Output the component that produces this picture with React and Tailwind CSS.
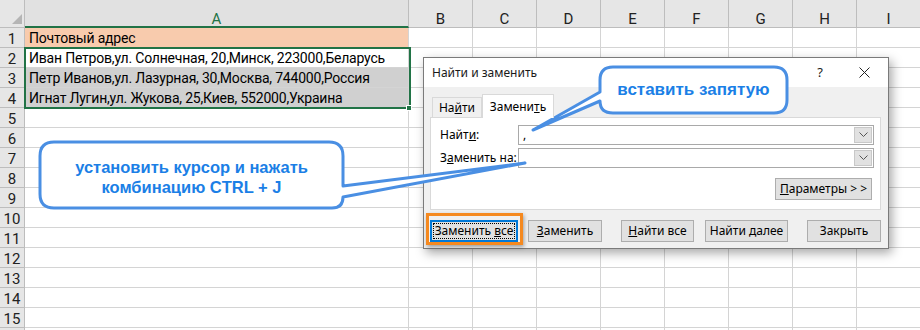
import React from "react";

const COLS = ["B", "C", "D", "E", "F", "G", "H", "I"];
const ROWS = Array.from({ length: 16 }, (_, i) => i + 1);

const A_CELLS = {
  1: { text: "Почтовый адрес", bg: "bg-[#f8cbad]" },
  2: { text: "Иван Петров,ул. Солнечная, 20,Минск, 223000,Беларусь", bg: "bg-white" },
  3: { text: "Петр Иванов,ул. Лазурная, 30,Москва, 744000,Россия", bg: "bg-[#d0d0d0]" },
  4: { text: "Игнат Лугин,ул. Жукова, 25,Киев, 552000,Украина", bg: "bg-[#d0d0d0]" },
};

function Chevron() {
  return (
    <svg width="9" height="6" viewBox="0 0 9 6">
      <path d="M0.5 0.5 L4.5 4.5 L8.5 0.5" fill="none" stroke="#555" strokeWidth="1" />
    </svg>
  );
}

function Combo({ value }) {
  return (
    <div className="flex-1 h-[20px] border border-[#a9a9a9] bg-white flex">
      <div className="flex-1 pl-[4px] text-[12px] leading-[18px]">{value}</div>
      <div className="w-[18px] m-[1px] bg-[#e1e1e1] border border-[#c8c8c8] flex items-center justify-center">
        <Chevron />
      </div>
    </div>
  );
}

function Btn({ w, children }) {
  return (
    <div className={`${w} h-[22px] bg-[#e1e1e1] border border-[#adadad] flex items-center justify-center text-[12px]`}>
      {children}
    </div>
  );
}

function Dialog() {
  return (
    <div
      className="absolute left-[423px] top-[57px] w-[466px] h-[192px] border border-[#7a7a7a] bg-[#f0f0f0] flex flex-col shadow-[3px_4px_10px_rgba(0,0,0,0.35)]"
      style={{ fontFamily: '"Noto Sans", "Open Sans", sans-serif' }}
    >
      <div className="h-[29px] bg-white flex items-center pl-[8px] pr-[18px] text-[12px] text-[#1a1a1a]">
        <span>Найти и заменить</span>
        <span className="ml-auto text-[13px]">?</span>
        <svg className="ml-[36px]" width="11" height="11" viewBox="0 0 11 11">
          <path d="M0.5 0.5 L10.5 10.5 M10.5 0.5 L0.5 10.5" stroke="#222" strokeWidth="1" />
        </svg>
      </div>
      <div className="flex flex-col pl-[6px] pt-[6px]">
        <div className="flex items-end h-[24px] ml-[2px]">
          <div className="w-[50px] h-[20px] border border-b-0 border-[#d9d9d9] bg-[#f0f0f0] flex items-center justify-center text-[12px]">
            <span>
              На<span className="underline">й</span>ти
            </span>
          </div>
          <div className="w-[72px] h-[24px] border border-b-0 border-[#d9d9d9] bg-white flex items-center justify-center text-[12px] relative z-10 mb-[-1px]">
            <span>
              Замени<span className="underline">т</span>ь
            </span>
          </div>
        </div>
        <div className="w-[451px] h-[93px] bg-white border border-[#d9d9d9] pt-[7px] pl-[9px] pr-[6px] flex flex-col">
          <div className="flex items-center h-[20px]">
            <div className="w-[78px] text-[12px]">
              Найт<span className="underline">и</span>:
            </div>
            <Combo value="," />
          </div>
          <div className="flex items-center h-[20px] mt-[3px]">
            <div className="w-[78px] text-[12px]">
              З<span className="underline">а</span>менить на:
            </div>
            <Combo value="" />
          </div>
          <div className="flex justify-end mt-[10px] pr-[2px]">
            <Btn w="w-[97px]">
              <span>
                <span className="underline">П</span>араметры &gt; &gt;
              </span>
            </Btn>
          </div>
        </div>
        <div className="flex mt-[10px]">
          <div className="w-[88px] h-[22px] bg-[#e1e1e1] border-2 border-[#0078d7] flex p-[1px]">
            <div className="flex-1 border border-dotted border-black flex items-center justify-center text-[12px]">
              <span>
                Заменить <span className="underline">в</span>се
              </span>
            </div>
          </div>
          <div className="ml-[10px]">
            <Btn w="w-[74px]">
              <span>
                <span className="underline">З</span>аменить
              </span>
            </Btn>
          </div>
          <div className="ml-[19px]">
            <Btn w="w-[73px]">
              <span>
                <span className="underline">Н</span>айти все
              </span>
            </Btn>
          </div>
          <div className="ml-[11px]">
            <Btn w="w-[83px]">
              <span>
                Найти <span className="underline">д</span>алее
              </span>
            </Btn>
          </div>
          <div className="ml-[19px]">
            <Btn w="w-[74px]">
              <span>Закрыть</span>
            </Btn>
          </div>
        </div>
      </div>
      <div className="absolute left-[2px] top-[155px] w-[97px] h-[32px] border-[3px] border-[#f5891f] shadow-[1px_2px_4px_rgba(0,0,0,0.35)] pointer-events-none" />
    </div>
  );
}

function Callouts() {
  return (
    <>
      <svg className="absolute left-0 top-0 pointer-events-none" width="920" height="330" viewBox="0 0 920 330">
        <path
          d="M613,67 H774 Q787,67 787,80 V100 Q787,113 774,113 H613 Q600,113 600,101 L533,130 L600,92 V80 Q600,67 613,67 Z"
          fill="white"
          stroke="#4a8fe3"
          strokeWidth="3"
          strokeLinejoin="round"
        />
        <path
          d="M54,142 H329 Q343,142 343,156 V186 L525,163 L343,197 Q343,208 332,208 H54 Q40,208 40,194 V156 Q40,142 54,142 Z"
          fill="white"
          stroke="#4a8fe3"
          strokeWidth="3"
          strokeLinejoin="round"
        />
      </svg>
      <div
        className="absolute left-[600px] top-[67px] w-[187px] h-[46px] flex items-center justify-center text-[17px] font-bold text-[#1b7fe6] pb-[1px]"
        style={{ fontFamily: '"Liberation Sans", Arial, sans-serif' }}
      >
        вставить запятую
      </div>
      <div
        className="absolute left-[40px] top-[142px] w-[303px] h-[66px] flex flex-col items-center justify-center text-[16.5px] leading-[20px] font-bold text-[#1b7fe6] pt-[3px]"
        style={{ fontFamily: '"Liberation Sans", Arial, sans-serif' }}
      >
        <span>установить курсор и нажать</span>
        <span>комбинацию CTRL + J</span>
      </div>
    </>
  );
}

export default function App() {
  return (
    <div
      className="relative w-[920px] h-[330px] overflow-hidden bg-white text-black"
      style={{ fontFamily: 'Roboto, "Liberation Sans", sans-serif' }}
    >
      <div className="flex h-[28px]">
        <div className="w-[25px] shrink-0 bg-[#e6e6e6] border-r border-b border-[#bdbdbd] relative">
          <svg className="absolute right-[2px] bottom-[3px]" width="10" height="10" viewBox="0 0 10 10">
            <path d="M10 0 L10 10 L0 10 Z" fill="#b5b5b5" />
          </svg>
        </div>
        <div className="w-[384px] shrink-0 bg-[#e1e1e1] border-r border-[#bdbdbd] border-b-2 border-b-[#217346] text-center text-[15px] leading-[18px] pt-[10px] text-[#217346]">
          A
        </div>
        {COLS.map((c) => (
          <div
            key={c}
            className="w-[64px] shrink-0 bg-[#e6e6e6] border-r border-b border-[#bdbdbd] text-center text-[15px] leading-[18px] pt-[10px] text-[#222]"
          >
            {c}
          </div>
        ))}
      </div>
      {ROWS.map((r) => {
        const a = A_CELLS[r];
        return (
          <div key={r} className="flex h-[20px]">
            <div className="w-[25px] shrink-0 bg-[#e6e6e6] border-r border-b border-[#bdbdbd] text-center text-[15px] leading-[18px] pt-[2px] text-[#222]">
              {r < 16 ? r : ""}
            </div>
            <div
              className={`w-[384px] shrink-0 border-r border-b border-[#d4d4d4] pl-[4px] pt-[1px] text-[14px] leading-[18px] whitespace-nowrap overflow-hidden tracking-[-0.2px] ${a ? a.bg : "bg-white"}`}
            >
              {a ? a.text : ""}
            </div>
            {COLS.map((c) => (
              <div key={c} className="w-[64px] shrink-0 border-r border-b border-[#d4d4d4]" />
            ))}
          </div>
        );
      })}
      <div className="absolute left-[24px] top-[47px] w-[387px] h-[62px] border-2 border-[#217346] pointer-events-none" />
      <div className="absolute left-[406px] top-[105px] w-[6px] h-[6px] bg-[#217346] border border-white pointer-events-none" />
      <Dialog />
      <Callouts />
    </div>
  );
}
